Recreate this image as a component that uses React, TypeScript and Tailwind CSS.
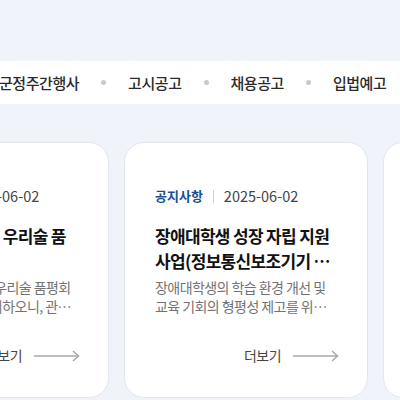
import { Fragment } from 'react'

const FONT = "font-['Noto_Sans_CJK_KR','Noto_Sans',sans-serif]"

const menus = ['군정주간행사', '고시공고', '채용공고', '입법예고']

const notices = [
  {
    category: '공지사항',
    date: '2025-06-02',
    title: '2025 홍천 전통 우리술 품평회',
    desc: '2025년 홍천 전통 우리술 품평회를 아래와 같이 개최하오니, 관심 있는 분들의 많은 참여 바랍니다.',
  },
  {
    category: '공지사항',
    date: '2025-06-02',
    title: '장애대학생 성장 자립 지원 사업(정보통신보조기기 지원) 안내',
    desc: '장애대학생의 학습 환경 개선 및 교육 기회의 형평성 제고를 위한 지원 사업을 안내합니다.',
  },
  {
    category: '공지사항',
    date: '2025-06-02',
    title: '2025년 하반기 공공근로사업 참여자 모집',
    desc: '2025년 하반기 공공근로사업 참여자를 다음과 같이 모집합니다.',
  },
]

function Arrow() {
  return (
    <svg width="46" height="12" viewBox="0 0 46 12" fill="none">
      <path d="M0 6H44.5" stroke="#a9a9a9" strokeWidth="1.5" />
      <path d="M39 1L44.5 6L39 11" stroke="#a9a9a9" strokeWidth="1.5" />
    </svg>
  )
}

export default function App() {
  return (
    <main className={`h-[400px] w-[400px] overflow-hidden bg-[#f0f4fa] ${FONT}`}>
      {/* Menu bar */}
      <div className="mt-[61px] flex h-[43px] items-center bg-white">
        <div className="-ml-[1px] flex items-center gap-[22px] whitespace-nowrap">
          {menus.map((m, i) => (
            <Fragment key={m}>
              {i > 0 && <span className="h-[5px] w-[5px] shrink-0 rounded-full bg-[#c9c9c9]" />}
              <span className="text-[15px] font-medium leading-none tracking-[-0.03em] text-[#2b2b2b]">{m}</span>
            </Fragment>
          ))}
        </div>
      </div>

      {/* Cards */}
      <div className="-ml-[135px] mt-[38px] flex gap-[15px]">
        {notices.map((n, i) => (
          <div
            key={i}
            className="flex h-[256px] w-[244px] shrink-0 flex-col rounded-[20px] border border-[#e3e6eb] bg-white px-[30px] pt-[43px]"
          >
            <div className="flex h-[20px] items-center">
              <span className="text-[13px] font-bold text-[#1c4f8c]">{n.category}</span>
              <span className="mx-[10px] h-[13px] w-px bg-[#cfcfcf]" />
              <span className="text-[14.5px] text-[#444]">{n.date}</span>
            </div>
            <p className="mt-[17px] line-clamp-2 text-[17px] font-bold leading-[25px] tracking-[-0.04em] text-[#111]">
              {n.title}
            </p>
            <p className="mt-[5px] line-clamp-2 text-[14px] leading-[19px] tracking-[-0.04em] text-[#737373]">
              {n.desc}
            </p>
            <div className="mt-auto mb-[31px] -mr-[2px] flex items-center justify-end gap-[12px]">
              <span className="text-[14px] tracking-[-0.04em] text-[#444]">더보기</span>
              <Arrow />
            </div>
          </div>
        ))}
      </div>
    </main>
  )
}
